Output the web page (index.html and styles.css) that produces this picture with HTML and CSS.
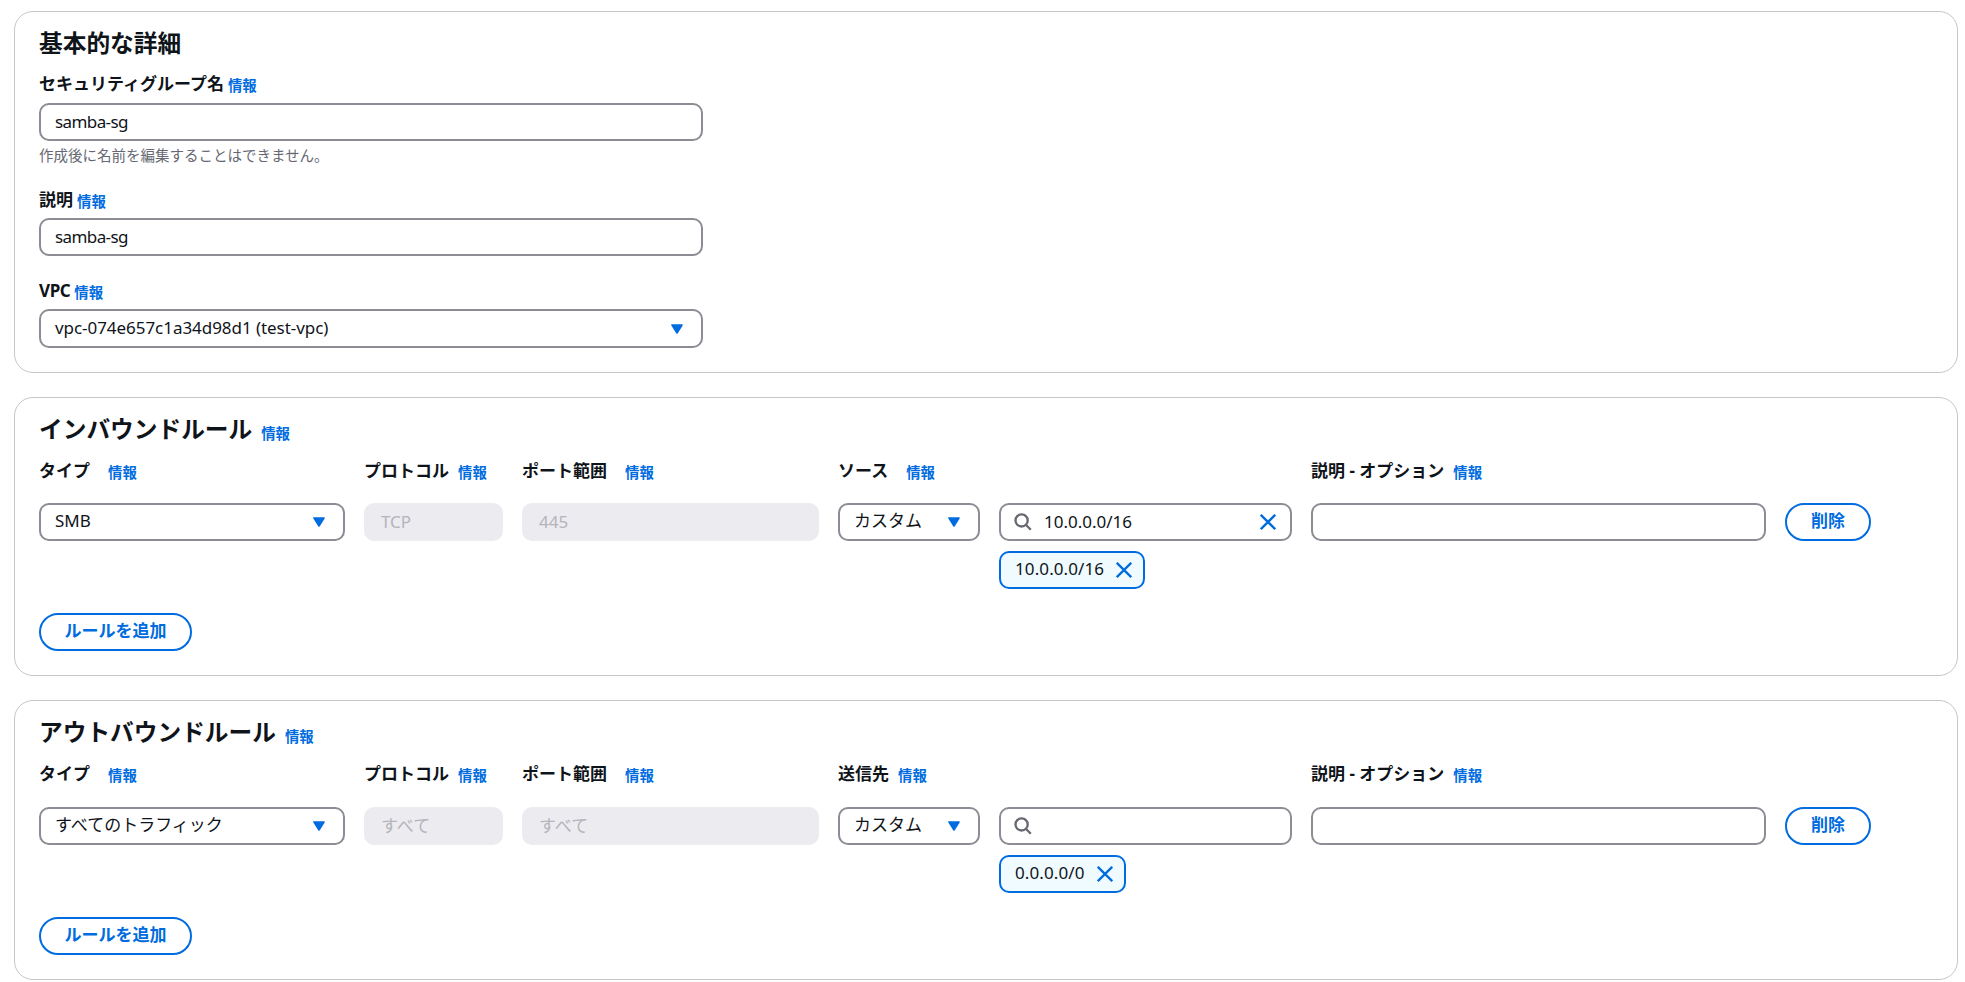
FILE: index.html
```
<!DOCTYPE html>
<html lang="ja">
<head>
    <meta charset="UTF-8">
    <meta name="viewport" content="width=device-width, initial-scale=1.0">
    <title>セキュリティグループを作成</title>
    <link rel="stylesheet" href="styles.css">
</head>
<body>
    <svg class="defs" width="0" height="0">
        <symbol id="caret" viewBox="0 0 12 10"><path d="M1 1h10L6 9z" fill="#006ce0" stroke="#006ce0" stroke-width="1.6" stroke-linejoin="round"/></symbol>
        <symbol id="search" viewBox="0 0 18 18"><g fill="none" stroke="#656871" stroke-width="2.3"><circle cx="7.6" cy="7.4" r="6.1"/><path d="M11.8 11.8l5 5"/></g></symbol>
        <symbol id="close" viewBox="0 0 16 16"><path d="M.8.8l14.4 14.4M15.2.8L.8 15.2" fill="none" stroke="#006ce0" stroke-width="2.3"/></symbol>
    </svg>

    <section class="card basic">
        <h2>基本的な詳細</h2>
        <div class="field">
            <div class="label">セキュリティグループ名<a class="info">情報</a></div>
            <div class="input name">samba-sg</div>
            <div class="hint">作成後に名前を編集することはできません。</div>
        </div>
        <div class="field">
            <div class="label">説明<a class="info">情報</a></div>
            <div class="input name">samba-sg</div>
        </div>
        <div class="field">
            <div class="label"><span class="abbr">VPC</span><a class="info">情報</a></div>
            <div class="input select vpc"><span>vpc-074e657c1a34d98d1 (test-vpc)</span><svg class="caret"><use href="#caret"/></svg></div>
        </div>
    </section>

    <section class="card inbound">
        <h2>インバウンドルール<a class="info">情報</a></h2>
        <div class="grid head">
            <div class="label wide">タイプ<a class="info">情報</a></div>
            <div class="label">プロトコル<a class="info">情報</a></div>
            <div class="label wide">ポート範囲<a class="info">情報</a></div>
            <div class="label wide source">ソース<a class="info">情報</a></div>
            <div class="label">説明 - オプション<a class="info">情報</a></div>
        </div>
        <div class="grid rule">
            <div class="input select"><span>SMB</span><svg class="caret"><use href="#caret"/></svg></div>
            <div class="input disabled">TCP</div>
            <div class="input disabled">445</div>
            <div class="input select"><span>カスタム</span><svg class="caret"><use href="#caret"/></svg></div>
            <div class="cidr">
                <div class="input search"><svg class="glass"><use href="#search"/></svg><span>10.0.0.0/16</span><svg class="close"><use href="#close"/></svg></div>
                <div class="token"><span>10.0.0.0/16</span><svg class="close"><use href="#close"/></svg></div>
            </div>
            <div class="input"></div>
            <div class="btn">削除</div>
        </div>
        <div class="btn add">ルールを追加</div>
    </section>

    <section class="card outbound">
        <h2>アウトバウンドルール<a class="info">情報</a></h2>
        <div class="grid head">
            <div class="label wide">タイプ<a class="info">情報</a></div>
            <div class="label">プロトコル<a class="info">情報</a></div>
            <div class="label wide">ポート範囲<a class="info">情報</a></div>
            <div class="label source">送信先<a class="info">情報</a></div>
            <div class="label">説明 - オプション<a class="info">情報</a></div>
        </div>
        <div class="grid rule">
            <div class="input select"><span>すべてのトラフィック</span><svg class="caret"><use href="#caret"/></svg></div>
            <div class="input disabled">すべて</div>
            <div class="input disabled">すべて</div>
            <div class="input select"><span>カスタム</span><svg class="caret"><use href="#caret"/></svg></div>
            <div class="cidr">
                <div class="input search"><svg class="glass"><use href="#search"/></svg></div>
                <div class="token"><span>0.0.0.0/0</span><svg class="close"><use href="#close"/></svg></div>
            </div>
            <div class="input"></div>
            <div class="btn">削除</div>
        </div>
        <div class="btn add">ルールを追加</div>
    </section>
</body>
</html>
```
FILE: styles.css
```
*{
    margin: 0px;
    padding: 0px;
    box-sizing: border-box;
}
body{
    padding: 11px 7px 0px 14px;
    background-color: #fff;
    color: #0f141a;
    font: 17px/24px "Noto Sans", "Noto Sans CJK JP", sans-serif;
    white-space: nowrap;
    overflow: hidden;
}
.defs{
    position: absolute;
}
.card{
    border: 1px solid #c6c6cd;
    border-radius: 19px;
    padding: 14px 24px 0px;
    margin-bottom: 24px;
}
.basic{
    height: 362px;
}
.inbound{
    height: 279px;
}
.outbound{
    height: 280px;
    margin-bottom: 0px;
}
h2{
    font-size: 23.7px;
    line-height: 35px;
    height: 36px;
}
.info{
    display: inline-block;
    margin-left: 4px;
    padding-top: 1px;
    color: #006ce0;
    font-size: 14.4px;
    font-weight: 700;
    line-height: 20px;
    vertical-align: -1px;
}
h2 .info{
    margin-left: 9px;
}
.label{
    height: 24px;
    font-weight: 700;
}
.abbr{
    letter-spacing: -.4px;
}
.field{
    width: 664px;
    margin-bottom: 23px;
}
h2 + .field{
    margin-top: 10px;
}
.field .label{
    margin-bottom: 6px;
}
h2 + .field .label{
    margin-bottom: 7px;
}
.hint{
    height: 20px;
    margin-top: 4px;
    color: #656871;
    font-size: 14.5px;
    line-height: 20px;
}
.input{
    display: flex;
    align-items: center;
    height: 38px;
    padding: 0px 14px;
    border: 2px solid #8c8c94;
    border-radius: 10px;
}
.name{
    letter-spacing: -.6px;
    padding-bottom: 1px;
}
.vpc{
    height: 39px;
    letter-spacing: -.05px;
}
.disabled{
    padding-left: 15px;
    border-color: #ebebf0;
    background-color: #ebebf0;
    color: #b4b4bb;
}
.select{
    justify-content: space-between;
    padding-right: 18px;
}
.select span{
    padding-bottom: 2px;
}
.caret{
    width: 12px;
    height: 10px;
}
.grid{
    display: grid;
    grid-template-columns: 306px 139px 297px 142px 293px 455px 86px;
    column-gap: 19px;
    align-items: start;
}
.head{
    margin-top: 11px;
}
.head .info{
    margin-left: 9px;
}
.head .wide .info{
    margin-left: 18px;
}
.source{
    grid-column: span 2;
}
.rule{
    margin-top: 20px;
}
.outbound .rule{
    margin-top: 21px;
}
.search{
    padding: 0px 14px 0px 13px;
}
.glass{
    width: 18px;
    height: 18px;
    margin-right: 12px;
}
.close{
    width: 16px;
    height: 16px;
    margin-left: auto;
}
.token{
    display: inline-flex;
    align-items: center;
    height: 38px;
    margin-top: 10px;
    padding: 0px 11px 0px 14px;
    border: 2px solid #006ce0;
    border-radius: 10px;
    background-color: #f0fbff;
}
.token span{
    padding-bottom: 2px;
    letter-spacing: .1px;
}
.token .close{
    margin-left: 12px;
}
.btn{
    height: 38px;
    border: 2px solid #006ce0;
    border-radius: 19px;
    color: #006ce0;
    font-weight: 700;
    line-height: 32px;
    text-align: center;
}
.add{
    width: 153px;
    margin-top: 24px;
}
```
